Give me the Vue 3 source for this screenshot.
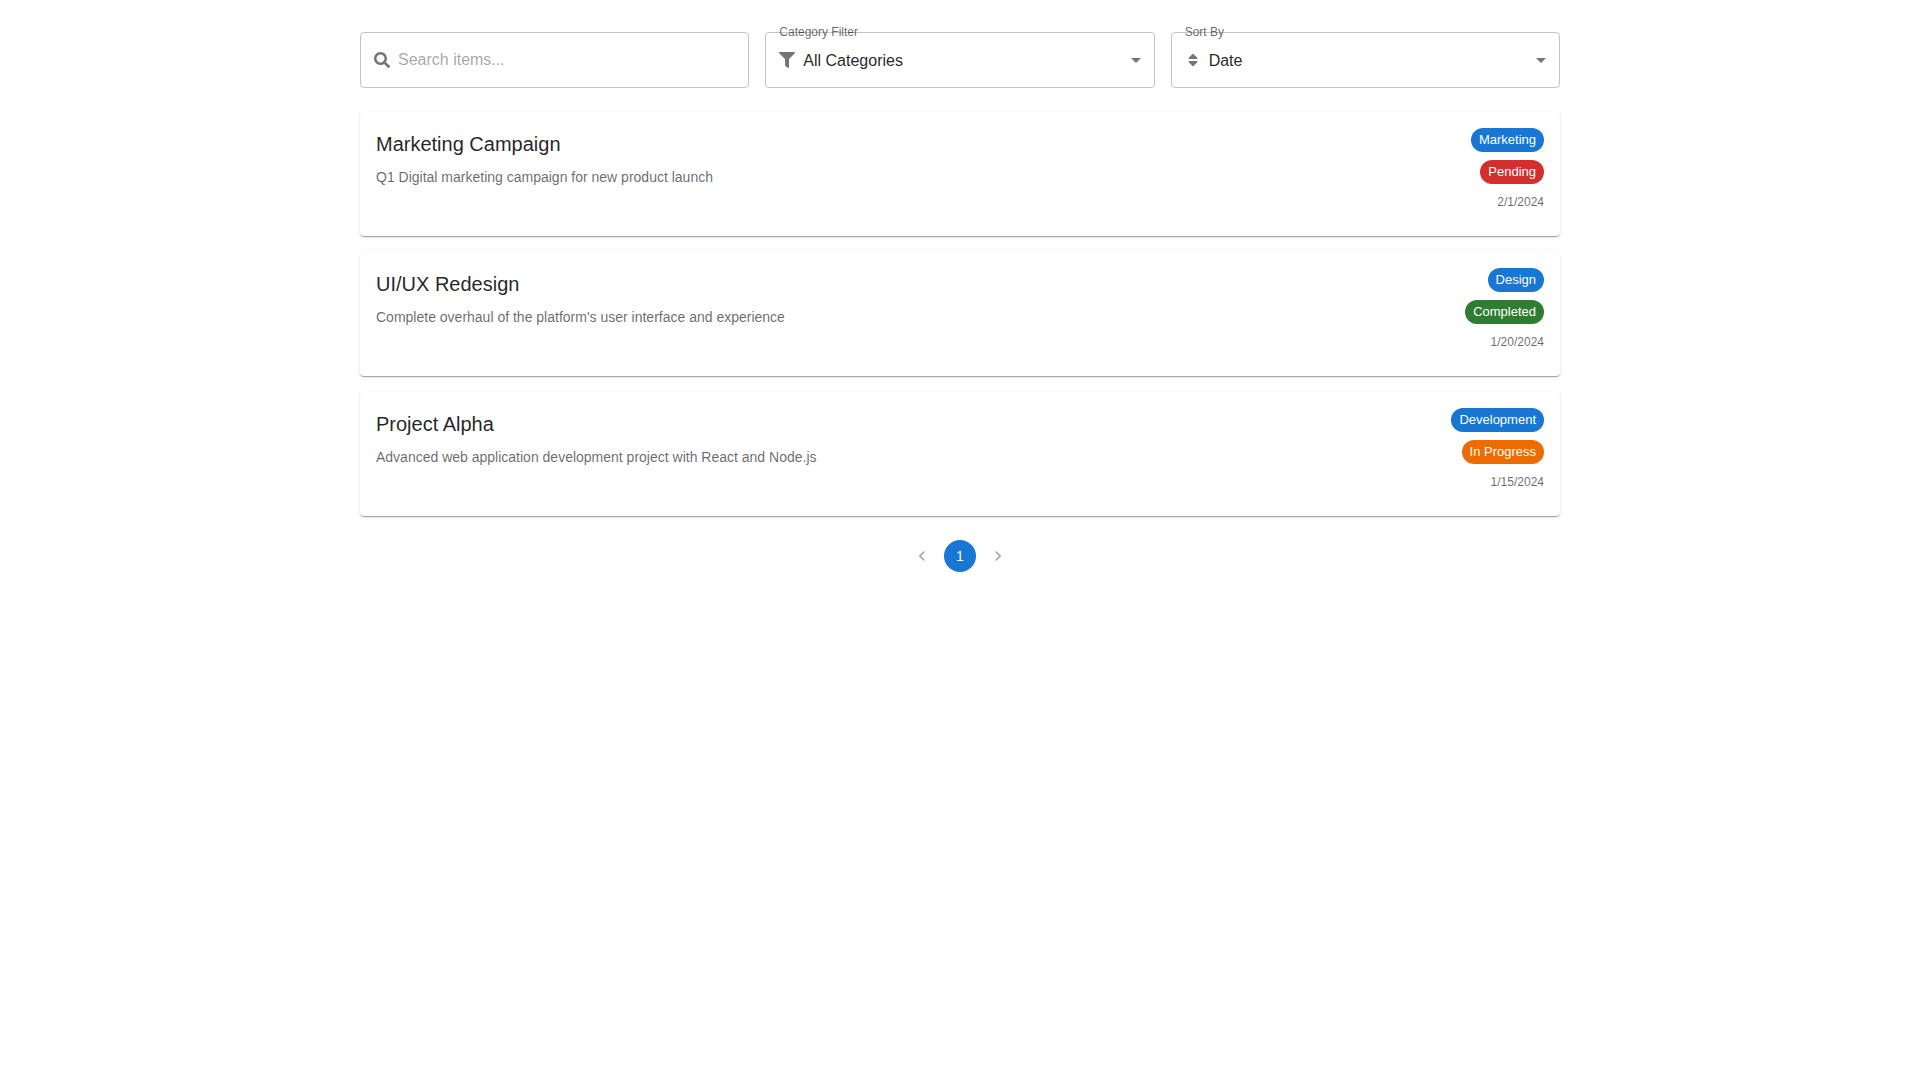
<script setup>
import { ref, computed } from 'vue';

const items = [
  {
    id: 1,
    title: 'Project Alpha',
    description: 'Advanced web application development project with React and Node.js',
    category: 'Development',
    status: 'In Progress',
    date: '2024-01-15'
  },
  {
    id: 2,
    title: 'Marketing Campaign',
    description: 'Q1 Digital marketing campaign for new product launch',
    category: 'Marketing',
    status: 'Pending',
    date: '2024-02-01'
  },
  {
    id: 3,
    title: 'UI/UX Redesign',
    description: "Complete overhaul of the platform's user interface and experience",
    category: 'Design',
    status: 'Completed',
    date: '2024-01-20'
  }
];

const pageSize = 5;
const search = ref('');
const category = ref('all');
const sortBy = ref('date');
const page = ref(1);

const filteredItems = computed(() => {
  const term = search.value.trim().toLowerCase();

  return items
    .filter((item) => category.value === 'all' || item.category === category.value)
    .filter((item) => (item.title + ' ' + item.description).toLowerCase().includes(term))
    .sort((a, b) => {
      if (sortBy.value === 'date') return b.date.localeCompare(a.date);
      return a[sortBy.value].localeCompare(b[sortBy.value]);
    });
});

const pageCount = computed(() => Math.max(1, Math.ceil(filteredItems.value.length / pageSize)));
const visibleItems = computed(() => filteredItems.value.slice((page.value - 1) * pageSize, page.value * pageSize));

const formatDate = (date) => {
  const [year, month, day] = date.split('-').map(Number);
  return `${month}/${day}/${year}`;
};

const statusClass = (status) => status.toLowerCase().replace(' ', '-');
</script>

<template>
  <main class="container">
    <div class="filters">
      <div class="field">
        <svg class="field-icon" viewBox="0 0 512 512" aria-hidden="true">
          <path d="M505 442.7L405.3 343c-4.5-4.5-10.6-7-17-7H372c27.6-35.3 44-79.7 44-128C416 93.1 322.9 0 208 0S0 93.1 0 208s93.1 208 208 208c48.3 0 92.7-16.4 128-44v16.3c0 6.4 2.5 12.5 7 17l99.7 99.7c9.4 9.4 24.6 9.4 33.9 0l28.3-28.3c9.4-9.4 9.4-24.6.1-34zM208 336c-70.7 0-128-57.2-128-128 0-70.7 57.2-128 128-128 70.7 0 128 57.2 128 128 0 70.7-57.2 128-128 128z" />
        </svg>
        <input
          type="text"
          id="search"
          placeholder="Search items..."
          aria-label="Search items"
          v-model="search"
          @input="page = 1"
        />
      </div>

      <div class="field">
        <label for="category">Category Filter</label>
        <svg class="field-icon" viewBox="0 0 512 512" aria-hidden="true">
          <path d="M487.976 0H24.028C2.71 0-8.047 25.866 7.058 40.971L192 225.941V432c0 7.831 3.821 15.17 10.237 19.662l80 55.98C298.02 518.69 320 507.493 320 487.98V225.941l184.947-184.97C520.021 25.896 509.338 0 487.976 0z" />
        </svg>
        <select id="category" v-model="category" @change="page = 1">
          <option value="all">All Categories</option>
          <option value="Development">Development</option>
          <option value="Marketing">Marketing</option>
          <option value="Design">Design</option>
        </select>
        <svg class="arrow" viewBox="0 0 24 24" aria-hidden="true">
          <path d="M7 10l5 5 5-5z" />
        </svg>
      </div>

      <div class="field">
        <label for="sort">Sort By</label>
        <svg class="field-icon" viewBox="0 0 320 512" aria-hidden="true">
          <path d="M41 288h238c21.4 0 32.1 25.9 17 41L177 448c-9.4 9.4-24.6 9.4-33.9 0L24 329c-15.1-15.1-4.4-41 17-41zm255-105L177 64c-9.4-9.4-24.6-9.4-33.9 0L24 183c-15.1 15.1-4.4 41 17 41h238c21.4 0 32.1-25.9 17-41z" />
        </svg>
        <select id="sort" v-model="sortBy">
          <option value="date">Date</option>
          <option value="title">Title</option>
          <option value="status">Status</option>
        </select>
        <svg class="arrow" viewBox="0 0 24 24" aria-hidden="true">
          <path d="M7 10l5 5 5-5z" />
        </svg>
      </div>
    </div>

    <div class="list">
      <article v-for="item in visibleItems" :key="item.id" class="card">
        <div class="info">
          <h2>{{ item.title }}</h2>
          <p>{{ item.description }}</p>
        </div>
        <div class="meta">
          <span class="chip">{{ item.category }}</span>
          <span class="chip" :class="statusClass(item.status)">{{ item.status }}</span>
          <time :datetime="item.date">{{ formatDate(item.date) }}</time>
        </div>
      </article>
    </div>

    <nav class="pagination" aria-label="pagination">
      <button type="button" aria-label="Previous page" :disabled="page === 1" @click="page--">
        <svg viewBox="0 0 24 24" aria-hidden="true">
          <path d="M15.41 7.41L14 6l-6 6 6 6 1.41-1.41L10.83 12z" />
        </svg>
      </button>
      <button
        v-for="n in pageCount"
        :key="n"
        type="button"
        :class="{ 'current': n === page }"
        @click="page = n"
      >{{ n }}</button>
      <button type="button" aria-label="Next page" :disabled="page === pageCount" @click="page++">
        <svg viewBox="0 0 24 24" aria-hidden="true">
          <path d="M10 6L8.59 7.41 13.17 12l-4.58 4.59L10 18l6-6z" />
        </svg>
      </button>
    </nav>
  </main>
</template>

<style>
body {
  background: #fff;
}
</style>

<style scoped>
* {
  box-sizing: border-box;
}

.container {
  max-width: 1248px;
  margin: 0 auto;
  padding: 32px 24px;
  font-family: Arial, 'Liberation Sans', sans-serif;
  color: rgba(0, 0, 0, 0.87);
}

.filters {
  display: grid;
  grid-template-columns: repeat(3, 1fr);
  gap: 16px;
  margin-bottom: 24px;
}

.field {
  position: relative;
  display: flex;
  align-items: center;
  height: 56px;
  padding-left: 13px;
  border: 1px solid rgba(0, 0, 0, 0.23);
  border-radius: 4px;
}

.field:hover {
  border-color: rgba(0, 0, 0, 0.87);
}

.field label {
  position: absolute;
  top: -9px;
  left: 13px;
  font-size: 12px;
  line-height: 16px;
  color: rgba(0, 0, 0, 0.6);
}

.field-icon {
  flex: none;
  width: 16px;
  height: 16px;
  margin-right: 8px;
  fill: rgba(0, 0, 0, 0.54);
}

.field input,
.field select {
  flex: 1;
  min-width: 0;
  height: 100%;
  padding: 0 32px 0 0;
  border: none;
  outline: none;
  background: transparent;
  appearance: none;
  font-family: inherit;
  font-size: 16px;
  color: inherit;
}

.field input::placeholder {
  color: rgba(0, 0, 0, 0.37);
}

.arrow {
  position: absolute;
  top: 15px;
  right: 6px;
  width: 24px;
  height: 24px;
  fill: rgba(0, 0, 0, 0.54);
  pointer-events: none;
}

.list {
  display: flex;
  flex-direction: column;
  gap: 16px;
}

.card {
  display: flex;
  justify-content: space-between;
  gap: 16px;
  padding: 16px 16px 24px;
  border-radius: 4px;
  background: #fff;
  box-shadow: 0 2px 1px -1px rgba(0, 0, 0, 0.2), 0 1px 1px 0 rgba(0, 0, 0, 0.14), 0 1px 3px 0 rgba(0, 0, 0, 0.12);
}

.card h2 {
  margin: 0 0 7px;
  font-size: 20px;
  font-weight: 400;
  line-height: 32px;
}

.card p {
  margin: 0;
  font-size: 14px;
  line-height: 20px;
  color: rgba(0, 0, 0, 0.6);
}

.meta {
  display: flex;
  flex-direction: column;
  align-items: flex-end;
  gap: 8px;
  flex: none;
}

.chip {
  padding: 0 8px;
  border-radius: 12px;
  background: #1976d2;
  color: #fff;
  font-size: 13px;
  line-height: 24px;
}

.chip.pending {
  background: #d32f2f;
}

.chip.completed {
  background: #2e7d32;
}

.chip.in-progress {
  background: #ed6c02;
}

.meta time {
  font-size: 12px;
  line-height: 20px;
  color: rgba(0, 0, 0, 0.6);
}

.pagination {
  display: flex;
  justify-content: center;
  gap: 6px;
  margin-top: 24px;
}

.pagination button {
  display: flex;
  align-items: center;
  justify-content: center;
  min-width: 32px;
  height: 32px;
  padding: 0 6px;
  border: none;
  border-radius: 16px;
  background: transparent;
  font-family: inherit;
  font-size: 14px;
  color: inherit;
  cursor: pointer;
}

.pagination button.current {
  background: #1976d2;
  color: #fff;
}

.pagination button:disabled {
  opacity: 0.38;
  cursor: default;
}

.pagination svg {
  width: 20px;
  height: 20px;
  fill: currentColor;
}

@media (max-width: 700px) {
  .filters {
    grid-template-columns: 1fr;
  }
}
</style>
